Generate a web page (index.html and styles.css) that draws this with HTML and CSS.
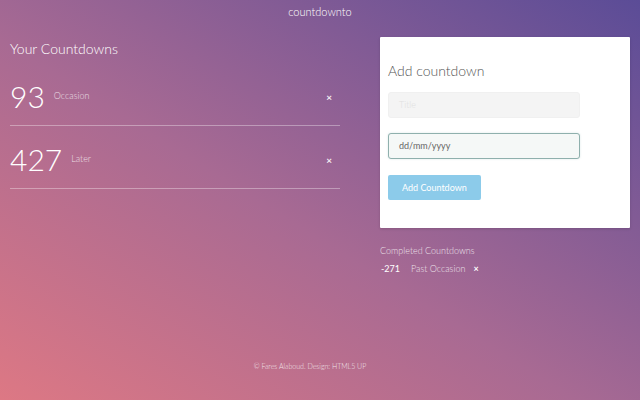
FILE: index.html
```html
<!DOCTYPE html>
<html>
<head>
<meta charset="utf-8">
<link rel="stylesheet" href="styles.css">
</head>
<body>
<div class="page">
  <header class="brand">countdownto</header>
  <main class="main">
    <section class="left">
      <h2 class="heading">Your Countdowns</h2>
      <div class="row first">
        <span class="num">93</span>
        <span class="label">Occasion</span>
        <span class="x">&times;</span>
      </div>
      <div class="row">
        <span class="num">427</span>
        <span class="label">Later</span>
        <span class="x">&times;</span>
      </div>
    </section>
    <section class="right">
      <div class="card">
        <h3 class="card-title">Add countdown</h3>
        <div class="input title-input">Title</div>
        <div class="input date-input">dd/mm/yyyy</div>
        <div class="btn">Add Countdown</div>
      </div>
      <div class="completed">
        <div class="completed-title">Completed Countdowns</div>
        <div class="completed-row">
          <span class="cnum">-271</span>
          <span class="clabel">Past Occasion</span>
          <span class="cx">&times;</span>
        </div>
      </div>
    </section>
  </main>
  <footer class="footer">&copy; Fares Alaboud. Design: HTML5 UP</footer>
</div>
</body>
</html>
```

FILE: styles.css
```css
html, body {
  margin: 0;
  padding: 0;
  height: 100%;
}
body {
  font-family: Lato, "Open Sans", sans-serif;
  font-weight: 300;
  color: #fff;
  background: linear-gradient(to top right, #dd7884 0%, #a86a93 45%, #5b4c97 100%);
  overflow: hidden;
}
.page {
  width: 640px;
  height: 400px;
  display: flex;
  flex-direction: column;
}
.brand {
  text-align: center;
  font-size: 11px;
  font-weight: 300;
  padding-top: 5px;
  height: 16px;
  line-height: 14px;
}
.main {
  display: flex;
  padding: 0 10px;
  gap: 40px;
  margin-top: 16px;
}
.left {
  width: 330px;
}
.heading {
  margin: 0;
  font-size: 14px;
  font-weight: 300;
  line-height: 20px;
  padding-top: 2px;
}
.row {
  display: flex;
  align-items: flex-end;
  border-bottom: 1px solid rgba(255,255,255,0.35);
  height: 63px;
  box-sizing: border-box;
  padding: 0 8px 14px 0;
}
.row.first {
  height: 67px;
}
.num {
  font-size: 30px;
  font-weight: 300;
  line-height: 30px;
  margin-right: 9px;
}
.label {
  font-size: 9px;
  line-height: 12px;
  opacity: 0.75;
  margin-bottom: 9px;
  flex: 1;
}
.x {
  font-size: 10px;
  line-height: 12px;
  font-weight: 700;
  opacity: 0.9;
  margin-bottom: 8px;
}
.right {
  width: 250px;
}
.card {
  background: #fff;
  box-shadow: 0 1px 3px rgba(0,0,0,0.15);
  padding: 25px 50px 28px 8px;
  border-radius: 1px;
}
.card-title {
  margin: 0 0 12px;
  font-size: 14px;
  font-weight: 300;
  color: #555;
  line-height: 18px;
}
.input {
  height: 26px;
  box-sizing: border-box;
  border-radius: 3px;
  font-size: 9px;
  line-height: 24px;
  padding-left: 10px;
  margin-bottom: 15px;
}
.title-input {
  background: #f4f4f4;
  color: #e0e0e0;
  border: 1px solid #f0f0f0;
}
.date-input {
  background: #f5f8f7;
  border: 1px solid #8fb0ad;
  color: #666;
  font-weight: 400;
  box-shadow: 0 0 2px rgba(120,170,170,0.3);
}
.btn {
  display: inline-block;
  background: #8ccbea;
  color: #fff;
  font-size: 9px;
  font-weight: 400;
  height: 25px;
  line-height: 25px;
  padding: 0 14px;
  border-radius: 2px;
  margin-top: 1px;
}
.completed {
  margin-top: 17px;
  font-size: 9px;
}
.completed-title {
  opacity: 0.8;
  line-height: 12px;
}
.completed-row {
  display: flex;
  align-items: center;
  margin-top: 6px;
  line-height: 12px;
}
.cnum {
  font-weight: 400;
  margin-left: 1px;
  margin-right: 11px;
}
.clabel {
  opacity: 0.8;
  margin-right: 8px;
}
.cx {
  font-weight: 700;
  font-size: 9px;
}
.footer {
  margin-top: auto;
  text-align: center;
  font-size: 7px;
  opacity: 0.8;
  padding: 0 20px 30px 0;
}
```
